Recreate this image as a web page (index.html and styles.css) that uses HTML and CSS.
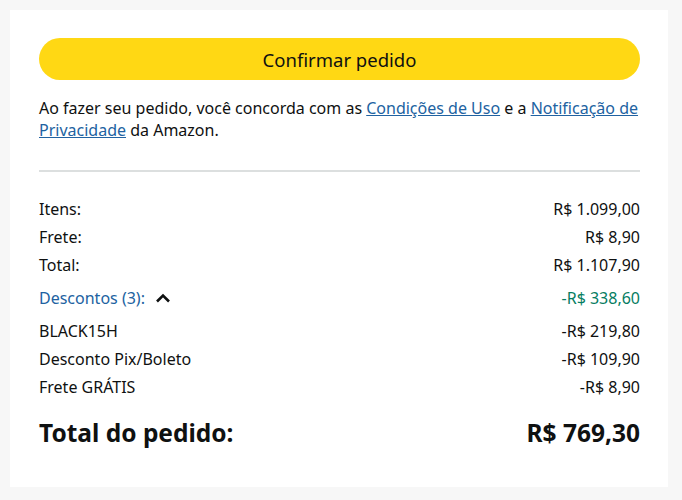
FILE: index.html
```html
<!DOCTYPE html>
<html lang="pt-BR">
<head>
<meta charset="utf-8">
<link rel="stylesheet" href="styles.css">
</head>
<body>
<div class="card">
  <button class="confirm">Confirmar pedido</button>
  <p class="terms">Ao fazer seu pedido, você concorda com as <a href="#">Condições de Uso</a> e a <a href="#">Notificação de Privacidade</a> da Amazon.</p>
  <hr class="divider">
  <div class="rows">
    <div class="row"><span>Itens:</span><span>R$ 1.099,00</span></div>
    <div class="row"><span>Frete:</span><span>R$ 8,90</span></div>
    <div class="row"><span>Total:</span><span>R$ 1.107,90</span></div>
    <div class="row discount-head">
      <span class="disc-label">Descontos (3):
        <svg class="chev" width="16" height="12" viewBox="0 0 16 12"><path d="M2 9.5 L8 3.5 L14 9.5" fill="none" stroke="#0f1111" stroke-width="2.6"/></svg>
      </span>
      <span class="green">-R$ 338,60</span>
    </div>
    <div class="row"><span>BLACK15H</span><span>-R$ 219,80</span></div>
    <div class="row"><span>Desconto Pix/Boleto</span><span>-R$ 109,90</span></div>
    <div class="row"><span>Frete GRÁTIS</span><span>-R$ 8,90</span></div>
  </div>
  <div class="grand"><span>Total do pedido:</span><span>R$ 769,30</span></div>
</div>
</body>
</html>
```
FILE: styles.css
```css
html, body { margin: 0; }
body {
  background: #f7f7f7;
  padding: 10px 14px 10px 10px;
  font-family: "Noto Sans", "Open Sans", sans-serif;
  color: #0f1111;
  font-size: 16px;
}
.card {
  background: #fff;
  padding: 28px 28px 38px 29px;
}
.confirm {
  display: block;
  width: 100%;
  height: 42px;
  border: none;
  border-radius: 21px;
  background: #ffd814;
  font-family: inherit;
  font-size: 18.5px;
  color: #0f1111;
  cursor: pointer;
}
.terms {
  margin: 17px 0 0;
  line-height: 22px;
}
.terms a { color: #2162a1; text-decoration: underline; }
.divider {
  border: none;
  border-top: 2px solid #dcdfdf;
  margin: 29px 0 23px;
}
.rows { display: flex; flex-direction: column; }
.row {
  display: flex;
  justify-content: space-between;
  align-items: center;
  height: 28px;
}
.discount-head { height: 38px; }
.disc-label { color: #2162a1; display: flex; align-items: center; gap: 10px; }
.green { color: #067d62; }
.grand {
  display: flex;
  justify-content: space-between;
  margin-top: 15px;
  font-size: 24.5px;
  font-weight: 700;
}
```
